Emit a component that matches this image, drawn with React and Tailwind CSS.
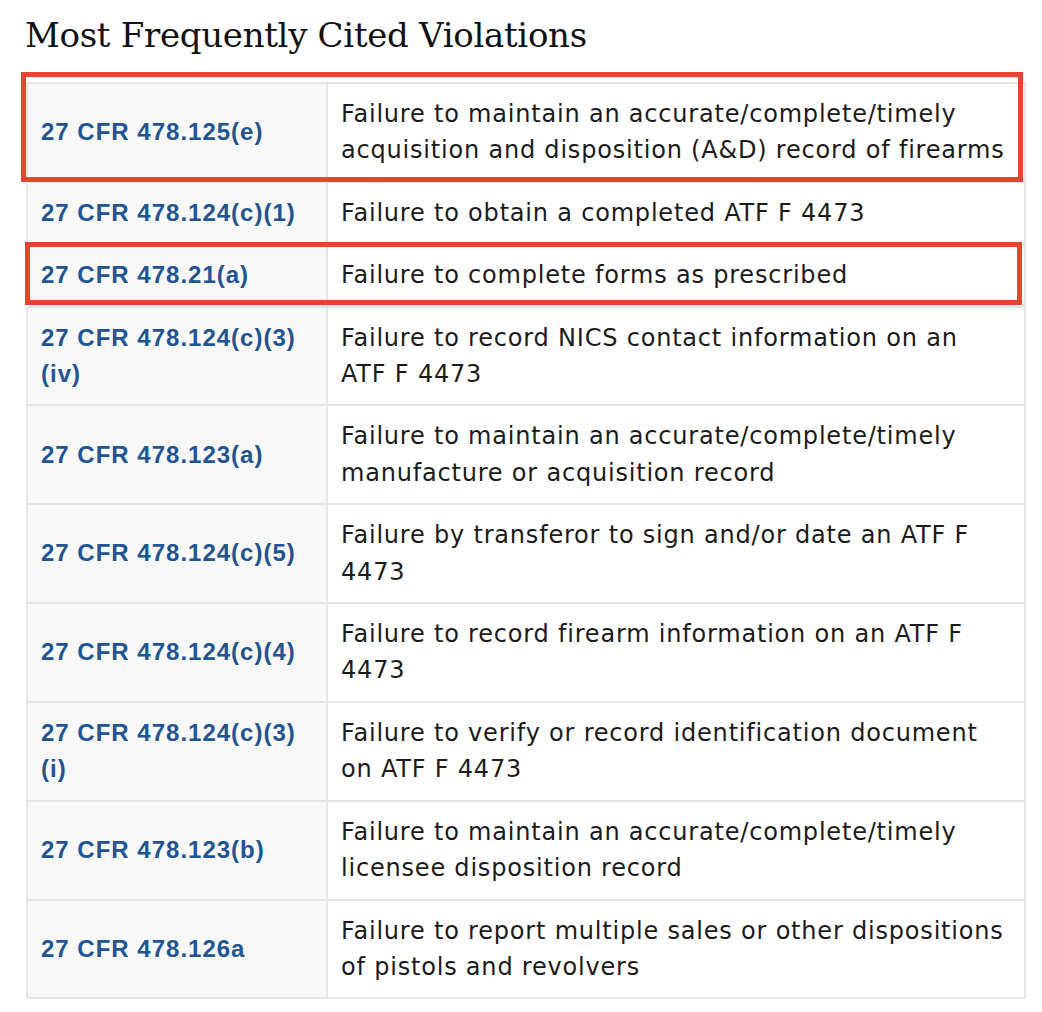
import React from 'react';

const rows = [
  ['27 CFR 478.125(e)', 'Failure to maintain an accurate/complete/timely acquisition and disposition (A&D) record of firearms'],
  ['27 CFR 478.124(c)(1)', 'Failure to obtain a completed ATF F 4473'],
  ['27 CFR 478.21(a)', 'Failure to complete forms as prescribed'],
  ['27 CFR 478.124(c)(3)(iv)', 'Failure to record NICS contact information on an ATF F 4473'],
  ['27 CFR 478.123(a)', 'Failure to maintain an accurate/complete/timely manufacture or acquisition record'],
  ['27 CFR 478.124(c)(5)', 'Failure by transferor to sign and/or date an ATF F 4473'],
  ['27 CFR 478.124(c)(4)', 'Failure to record firearm information on an ATF F 4473'],
  ['27 CFR 478.124(c)(3)(i)', 'Failure to verify or record identification document on ATF F 4473'],
  ['27 CFR 478.123(b)', 'Failure to maintain an accurate/complete/timely licensee disposition record'],
  ['27 CFR 478.126a', 'Failure to report multiple sales or other dispositions of pistols and revolvers'],
];

export default function App() {
  return (
    <div className="min-h-screen bg-white">
      <h1 className="pl-[25px] pt-[12px] text-[34px] leading-[46px] text-[#111] font-['DejaVu_Serif',serif] tracking-[-0.3px]">
        Most Frequently Cited Violations
      </h1>
      {/* table + annotation boxes */}
      <div className="relative mt-[24px] ml-[26px] w-[1000px]">
        <table className="w-full border-collapse border-2 border-[#e6e6e6] font-['DejaVu_Sans',sans-serif]">
          <tbody>
            {rows.map(([code, text]) => (
              <tr key={code} className="border-b-2 border-[#e6e6e6]">
                <td className="w-[300px] bg-[#f8f8f8] px-[13px] py-[12px] align-middle text-[24px] leading-[36.4px] font-bold text-[#205493] tracking-[1px] font-['Liberation_Sans',sans-serif] border-r-2 border-[#e6e6e6]">
                  <a href="#">{code}</a>
                </td>
                <td className="pl-[13px] pr-[16px] py-[12px] align-middle text-[24px] leading-[36.4px] text-[#1b1b1b] tracking-[0.8px]">
                  {text}
                </td>
              </tr>
            ))}
          </tbody>
        </table>
        <div className="absolute left-[-5px] top-[-10px] w-[1002px] h-[110px] border-[5px] border-[#e8432c] pointer-events-none" />
        <div className="absolute left-[-1px] top-[160px] w-[997px] h-[63px] border-[5px] border-[#e8432c] pointer-events-none" />
      </div>
    </div>
  );
}
